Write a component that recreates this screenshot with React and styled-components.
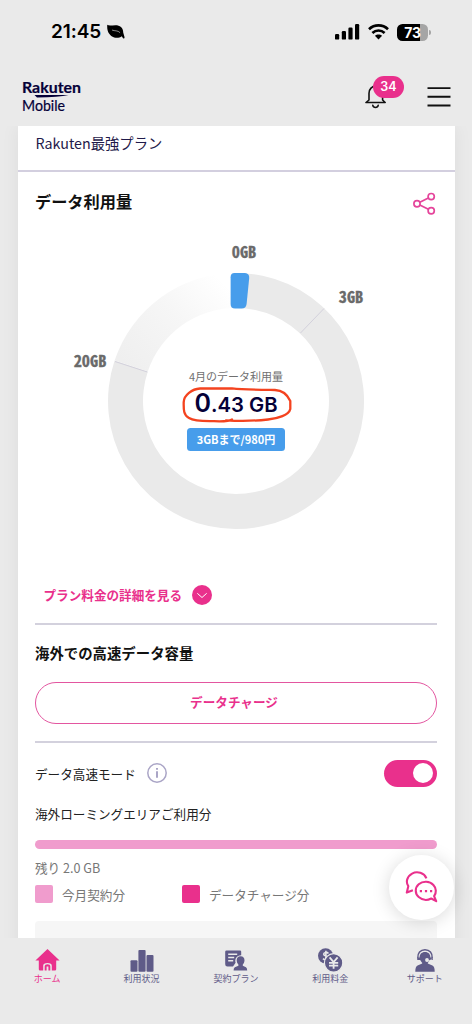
import styled, { createGlobalStyle } from 'styled-components';

const PINK = '#e9308c';
const INDIGO = '#5f5b88';
const NAVY = '#040038';

const GlobalStyle = createGlobalStyle`
  * {
    box-sizing: border-box;
  }

  body {
    margin: 0;
    background: #eaeaea;
    font-family: 'Noto Sans CJK JP', sans-serif;
  }

  svg {
    display: block;
    flex: none;
  }
`;

const Screen = styled.div`
  position: relative;
  display: flex;
  flex-direction: column;
  width: 472px;
  height: 1024px;
  overflow: hidden;
  background: #eaeaea;
`;

const StatusBar = styled.div`
  display: flex;
  align-items: center;
  justify-content: space-between;
  height: 64px;
  padding: 0 41px 0 51px;
`;

const StatusGroup = styled.div`
  display: flex;
  align-items: center;
  gap: ${({ $gap }) => $gap}px;
`;

const Clock = styled.span`
  font: 600 19px/24px Inter, sans-serif;
  letter-spacing: -0.1px;
  color: #000;
`;

const Battery = styled.div`
  display: flex;
  align-items: center;
  gap: 1px;

  &::after {
    content: '';
    width: 2px;
    height: 5px;
    border-radius: 0 2px 2px 0;
    background: #a5a5a5;
  }
`;

const BatteryLevel = styled.div`
  width: 31px;
  height: 17px;
  border-radius: 5.5px;
  background: linear-gradient(to right, #000 73%, #a5a5a5 73%);
  color: #fff;
  font: 700 14px/17px Inter, sans-serif;
  letter-spacing: -0.3px;
  text-align: center;
`;

const Header = styled.header`
  display: flex;
  align-items: center;
  justify-content: space-between;
  height: 62px;
  padding: 4px 21px 0 22px;
`;

const HeaderActions = styled.div`
  display: flex;
  align-items: center;
  gap: 40px;
`;

const BellButton = styled.div`
  position: relative;
`;

const BellCount = styled.span`
  position: absolute;
  top: -9px;
  left: 8px;
  width: 31px;
  height: 22px;
  border-radius: 11px;
  background: ${PINK};
  color: #fff;
  font: 600 12.5px/22px Inter, sans-serif;
  text-align: center;
`;

const Main = styled.main`
  height: 812px;
  padding: 0 17.5px;
  overflow: hidden;
`;

const Card = styled.div`
  display: flex;
  flex-direction: column;
  height: 850px;
  background: #fff;
  box-shadow: 0 0 18px rgba(0, 0, 0, 0.06);
`;

const PlanRow = styled.div`
  height: 46px;
  padding: 5px 18px 0;
  border-bottom: 2px solid #d3cfdf;
  color: #1f1a4a;
  font-size: 14.3px;
  line-height: 24px;
`;

const UsageHead = styled.div`
  display: flex;
  align-items: center;
  justify-content: space-between;
  height: 62px;
  padding: 0 19px 0 17.5px;
`;

const Heading = styled.h2`
  margin: 0;
  padding-bottom: ${({ $lift = 0 }) => $lift}px;
  color: #111;
  font-size: ${({ $size }) => $size}px;
  font-weight: 700;
  line-height: 24px;
`;

const Chart = styled.div`
  position: relative;
  height: 336px;
  margin-left: -17.5px;
`;

const TickLabel = styled.text`
  fill: #6a6a6a;
  stroke: #6a6a6a;
  stroke-width: 0.3px;
  font-size: 16.3px;
  font-weight: 700;
  font-feature-settings: 'hwid';
  text-anchor: middle;
`;

const ChartCenter = styled.div`
  position: absolute;
  top: 133px;
  left: 166px;
  display: flex;
  flex-direction: column;
  align-items: center;
  width: 140px;
`;

const ChartCaption = styled.span`
  color: #6f6f6f;
  font-size: 11px;
  line-height: 18px;
`;

const Amount = styled.span`
  height: 34px;
  margin-top: 1px;
  color: ${NAVY};
  font: 600 20.3px/34px Inter, sans-serif;
  white-space: nowrap;

  b {
    font-size: 25px;
    font-weight: 600;
  }
`;

const PriceTag = styled.span`
  width: 98px;
  height: 23px;
  margin-top: 8px;
  border-radius: 3.5px;
  background: #479deb;
  color: #fff;
  font-size: 11px;
  font-weight: 700;
  line-height: 23px;
  text-align: center;
`;

const Scribble = styled.svg`
  position: absolute;
  top: 0;
  left: 0;
`;

const DetailLink = styled.div`
  display: flex;
  align-items: center;
  gap: 10px;
  height: 53px;
  padding: 0 26px 3px;
  color: ${PINK};
  font-size: 12.6px;
  font-weight: 700;
  line-height: 18px;

  span {
    padding-bottom: 1px;
  }
`;

const Rule = styled.hr`
  width: 402px;
  height: 1.5px;
  margin: 0 17.5px;
  border: 0;
  background: #d3d1dd;
`;

const RoamingSection = styled.section`
  display: flex;
  flex-direction: column;
  height: 116.5px;
  padding: 16.5px 17.5px 0;
`;

const ChargeButton = styled.button`
  height: 42px;
  margin-top: 17px;
  padding: 0 4px 3px 0;
  border: 1.5px solid #e356a0;
  border-radius: 21px;
  background: #fff;
  color: ${PINK};
  font: 700 12.6px 'Noto Sans CJK JP', sans-serif;
`;

const SpeedRow = styled.div`
  display: flex;
  align-items: center;
  gap: 11px;
  height: 28px;
  margin: 16.5px 17.5px 0;
  color: #222;
  font-size: 12.6px;
`;

const Switch = styled.div`
  display: flex;
  align-items: center;
  justify-content: flex-end;
  width: 53px;
  height: 27px;
  margin-left: auto;
  padding: 0 4px;
  border-radius: 14px;
  background: ${PINK};

  &::after {
    content: '';
    width: 20px;
    height: 20px;
    border-radius: 50%;
    background: #fff;
  }
`;

const Quota = styled.div`
  display: flex;
  flex-direction: column;
  padding: 17px 17.5px 0;
`;

const QuotaTitle = styled.span`
  color: #222;
  font-size: 12.6px;
  line-height: 20px;
`;

const QuotaBar = styled.div`
  height: 9px;
  margin-top: 16px;
  border-radius: 5px;
  background: #f09ccd;
`;

const Remaining = styled.span`
  margin-top: 9px;
  color: #777;
  font-size: 12.6px;
  line-height: 20px;
`;

const Legend = styled.div`
  display: grid;
  grid-template-columns: 147px auto;
  margin-top: 7px;
`;

const LegendItem = styled.div`
  display: flex;
  align-items: center;
  gap: 9px;
  height: 18px;
  color: #777;
  font-size: 12.6px;

  &::before {
    content: '';
    width: 18px;
    height: 18px;
    border-radius: 2px;
    background: ${({ $color }) => $color};
  }
`;

const NextPanel = styled.div`
  height: 40px;
  margin-top: 18px;
  border-radius: 4px;
  background: #f6f6f6;
`;

const ChatButton = styled.button`
  position: absolute;
  top: 855px;
  left: 389px;
  display: grid;
  place-items: center;
  width: 65px;
  height: 65px;
  padding: 0;
  border: 0;
  border-radius: 50%;
  background: #fff;
  box-shadow: 0 2px 18px rgba(0, 0, 0, 0.15);
`;

const TabBar = styled.nav`
  z-index: 1;
  display: grid;
  grid-template-columns: repeat(5, 94.4px);
  height: 86px;
  padding-top: 10px;
  background: #eaeaea;
`;

const Tab = styled.div`
  display: flex;
  flex-direction: column;
  align-items: center;
  color: ${({ $active }) => ($active ? PINK : INDIGO)};
  font-size: 9px;
  line-height: 13px;
`;

const BrandLogo = () => (
  <svg width="62" height="36" viewBox="0 0 62 36" fill={NAVY}>
    <text x="0" y="14" fontFamily="Lato" fontWeight="700" fontSize="15.5" stroke={NAVY} strokeWidth=".2" textLength="59" lengthAdjust="spacingAndGlyphs">
      Rakuten
    </text>
    <path d="M12.5 16H46.5Q37 18.4 15 18.4Z" />
    <text x="0" y="32.3" fontFamily="Lato" fontWeight="400" fontSize="15" stroke={NAVY} strokeWidth=".2" textLength="43" lengthAdjust="spacingAndGlyphs">
      Mobile
    </text>
  </svg>
);

const LeafIcon = () => (
  <svg width="18" height="16" viewBox="0 0 18 16">
    <path d="M.3.8C1.8 2 5 1.2 8.4 1.2C13 1.2 16.4 4 16.2 8.6L17.5 13C17.8 14.6 16.2 14.9 15.7 13.8L14.8 12.2C12.8 13.8 9.8 14.3 7.2 13.4C2.4 11.8-.4 7.2.3.8Z" fill="#000" />
    <path d="M5.4 6.2C7.8 7.2 10.6 6.2 12.8 8.4" fill="none" stroke="#eaeaea" strokeWidth=".6" strokeLinecap="round" />
  </svg>
);

const SignalIcon = () => (
  <svg width="25" height="16" viewBox="0 0 25 16">
    <rect x="0" y="10" width="4.2" height="5.6" rx="1.2" />
    <rect x="6.8" y="7" width="4.2" height="8.6" rx="1.2" />
    <rect x="13.4" y="3.6" width="4.2" height="12" rx="1.2" />
    <rect x="20" y="0" width="4.2" height="15.6" rx="1.2" />
  </svg>
);

const WifiIcon = () => (
  <svg width="21" height="16" viewBox="0 0 21 16">
    <g fill="none" stroke="#000" strokeWidth="2.7">
      <path d="M1 5.2C6.4.2 14.6.2 20 5.2" />
      <path d="M4.4 8.9C7.9 5.7 13.1 5.7 16.6 8.9" />
    </g>
    <path d="M6.9 11.8C9 9.9 12 9.9 14.1 11.8L10.5 15.4Z" />
  </svg>
);

const BellIcon = () => (
  <svg width="22" height="24" viewBox="0 0 22 24" fill="none" stroke="#111" strokeWidth="1.6" strokeLinejoin="round" strokeLinecap="round">
    <path d="M1 17.5H20.2L17.6 15V8.2C17.6 4.2 14.6 1 10.8 1S4 4.2 4 8.2V15Z" />
    <path d="M7.8 20.4C8.4 23.2 12.6 23.2 13.2 20.4" />
  </svg>
);

const MenuIcon = () => (
  <svg width="24" height="20" viewBox="0 0 24 20" stroke="#111" strokeWidth="1.9">
    <path d="M.5 1.1H23.5M.5 9.8H23.5M.5 18.5H23.5" />
  </svg>
);

const ShareIcon = () => (
  <svg width="23" height="23" viewBox="0 0 23 23" fill="none" stroke="#e5459b" strokeWidth="1.7">
    <circle cx="4" cy="11.7" r="3.1" />
    <circle cx="18.2" cy="4.6" r="3.1" />
    <circle cx="18.2" cy="18.7" r="3.1" />
    <path d="M6.8 10.3L15.4 6M6.8 13.1L15.4 17.3" />
  </svg>
);

// ring centred on (236, 167), radii 93 and 128
const UsageRing = () => (
  <svg width="472" height="310" viewBox="0 0 472 310">
    <defs>
      <linearGradient id="fade" gradientUnits="userSpaceOnUse" x1="130" y1="135" x2="220" y2="45">
        <stop offset="0" stopColor="#efefef" />
        <stop offset=".55" stopColor="#f6f6f6" />
        <stop offset="1" stopColor="#fff" />
      </linearGradient>
    </defs>
    <path d="M236 39A128 128 0 1 1 114.6 126.5L147.8 137.5A93 93 0 1 0 236 74Z" fill="#eaeaea" />
    <path d="M114.6 126.5A128 128 0 0 1 236 39V74A93 93 0 0 0 147.8 137.5Z" fill="url(#fade)" />
    <g stroke="#d3d1dc" strokeWidth="1">
      <path d="M324 74.5L300.5 99" />
      <path d="M115 127.5L147.3 138" />
    </g>
    <path d="M234.5 39H245Q249.5 39.3 249.2 44L246.6 70Q246 74.6 241.6 74.6H235Q230.6 74.6 230.6 70V43.3Q230.6 39 234.5 39Z" fill="#479deb" />
    <TickLabel x="244" y="24">0GB</TickLabel>
    <TickLabel x="351" y="68.8">3GB</TickLabel>
    <TickLabel x="90" y="132.5">20GB</TickLabel>
  </svg>
);

const ExpandIcon = () => (
  <svg width="20" height="20" viewBox="0 0 20 20">
    <circle cx="10" cy="10" r="10" fill={PINK} />
    <path d="M5.3 8.3L10 12.5L14.7 8.3" fill="none" stroke="#fff" strokeWidth="1" />
  </svg>
);

const InfoIcon = () => (
  <svg width="20" height="20" viewBox="0 0 20 20" stroke="#aaa5c6" fill="none">
    <circle cx="10" cy="10" r="9.2" strokeWidth="1.5" />
    <path d="M10 8.3V14.8M10 5V6.8" strokeWidth="2" />
  </svg>
);

const ChatIcon = () => (
  <svg width="33" height="33" viewBox="0 0 33 33" fill="none" stroke={PINK} strokeWidth="2.1" strokeLinejoin="round">
    <path d="M21.4 7.4C19.2 1.8 12.2-.2 7.1 2.6C2 5.4.5 11 3.3 15.2L1.8 21.6L7.9 19.3" />
    <path d="M29.1 25.2C31.6 21.8 31.4 17 28.4 13.9C24.6 10 18 9.6 13.7 13.3C9.8 16.7 9.8 22.6 13.7 26C17.3 29.1 22.2 29.6 26.2 27.5L31.2 30.2Z" />
    <path d="M14.8 20.1H17M19.9 20.1H22.1M25 20.1H27.2" strokeWidth="2.4" />
  </svg>
);

const HomeIcon = () => (
  <svg width="25" height="24" viewBox="0 0 25 24" fill="currentColor">
    <path d="M12.5 1L24.6 12.6H21.2V21.2Q21.2 22.4 20 22.4H16.8V17.8Q16.8 15 12.5 15T8.2 17.8V22.4H5Q3.8 22.4 3.8 21.2V12.6H.4Z" />
    <path d="M9.7 22.4V18Q9.7 16.3 12.5 16.3T15.3 18V22.4H13.4V18.6H11.6V22.4Z" />
  </svg>
);

const UsageIcon = () => (
  <svg width="24" height="24" viewBox="0 0 24 24" fill="currentColor">
    <rect x=".5" y="12.3" width="7" height="11.4" rx="1" />
    <rect x="8.4" y="2" width="7.2" height="21.7" rx="1" />
    <rect x="16.5" y="7" width="7" height="16.7" rx="1" />
  </svg>
);

const PlanIcon = () => (
  <svg width="24" height="24" viewBox="0 0 24 24" fill="currentColor">
    <path d="M2.6 2.4H16Q17.2 2.4 17.2 3.6V7.2C12.4 7.2 10.6 11 11.6 14.8L9 18.4H3.4Q1.2 18.4 1.2 16.2V3.8Q1.2 2.4 2.6 2.4Z" />
    <path d="M4.2 6.2H13.2M4.2 9.5H10.2M4.2 12.8H9.2" stroke="#eaeaea" strokeWidth="1.4" />
    <path d="M16.6 8.2C19.3 8.2 20.6 10 20.5 12.5C20.4 14.3 19.6 15.8 18.8 16.5V17.8L22 19.2Q23.2 19.9 23.2 22.4H9.6Q9.6 19.9 10.8 19.2L14.4 17.8V16.5C13.6 15.8 12.8 14.3 12.7 12.5C12.6 10 13.9 8.2 16.6 8.2Z" />
  </svg>
);

const BillIcon = () => (
  <svg width="26" height="24" viewBox="0 0 26 24">
    <circle cx="8.6" cy="7.8" r="7.6" fill="currentColor" />
    <path d="M11.4 5.4C10 3.7 6.6 4.2 6.7 6.3C6.8 8.7 11.2 7.4 11.2 10C11.2 12.1 7.6 12.4 6 10.6M8.9 2.7V13" fill="none" stroke="#eaeaea" strokeWidth="1.6" />
    <circle cx="16.6" cy="14.9" r="9.2" fill="currentColor" stroke="#eaeaea" strokeWidth="1.2" />
    <path d="M12.6 9.4L16.6 14.2L20.6 9.4M16.6 14.2V20.8M12 14.8H21.2M12 17.6H21.2" fill="none" stroke="#eaeaea" strokeWidth="1.8" />
  </svg>
);

const SupportIcon = () => (
  <svg width="22" height="24" viewBox="0 0 22 24" fill="currentColor">
    <path d="M3.8 10.2C3.4 5 6.4 1.8 11 1.8S18.6 5 18.2 10.2" fill="none" stroke="currentColor" strokeWidth="1.5" />
    <path d="M11 4C14.5 4 16.5 6.3 16.4 9.6H18.8V11.4Q18.8 12 18.2 12H15.8C15.2 13.3 14.5 14 13.8 14.8V15.6L18.4 17.5Q20.7 18.5 20.7 23.7H1.3Q1.3 18.5 3.6 17.5L8.2 15.6V14.8C7.5 14 6.8 13.3 6.2 12H3.8Q3.2 12 3.2 11.4V9.6H5.6C5.5 6.3 7.5 4 11 4Z" />
    <circle cx="13" cy="12" r="1.9" fill="#eaeaea" />
    <path d="M13.6 13C16 13 17.2 12 17.8 10.7" fill="none" stroke="#eaeaea" strokeWidth=".8" />
  </svg>
);

const tabs = [
  { label: 'ホーム', Icon: HomeIcon, active: true },
  { label: '利用状況', Icon: UsageIcon },
  { label: '契約プラン', Icon: PlanIcon },
  { label: '利用料金', Icon: BillIcon },
  { label: 'サポート', Icon: SupportIcon },
];

const App = () => {
  return (
    <Screen>
      <GlobalStyle />
      <StatusBar>
        <StatusGroup $gap={6}>
          <Clock>21:45</Clock>
          <LeafIcon />
        </StatusGroup>
        <StatusGroup $gap={8}>
          <SignalIcon />
          <WifiIcon />
          <Battery>
            <BatteryLevel>73</BatteryLevel>
          </Battery>
        </StatusGroup>
      </StatusBar>
      <Header>
        <BrandLogo />
        <HeaderActions>
          <BellButton>
            <BellIcon />
            <BellCount>34</BellCount>
          </BellButton>
          <MenuIcon />
        </HeaderActions>
      </Header>
      <Main>
        <Card>
          <PlanRow>Rakuten最強プラン</PlanRow>
          <UsageHead>
            <Heading $size={16.2} $lift={4}>
              データ利用量
            </Heading>
            <ShareIcon />
          </UsageHead>
          <Chart>
            <UsageRing />
            <ChartCenter>
              <ChartCaption>4月のデータ利用量</ChartCaption>
              <Amount>
                <b>0</b>.43 GB
              </Amount>
              <PriceTag>3GBまで/980円</PriceTag>
            </ChartCenter>
            <Scribble width="472" height="310" viewBox="0 0 472 310" fill="none" stroke="#f4431f" strokeWidth="2.3" strokeLinecap="round" strokeLinejoin="round">
              <path d="M232 185.5C229 187.5 222 187.5 214 187.2C204 187 195 187.5 189 184C183 181 183.7 174 183.7 168C184 161 192 155 200 154.5L232 154.3C244 155.7 262 155.8 275 156C283 156.3 288 162 290.3 167V175C289 181 278 184.5 268 185.5C254 187 240 187.2 226 186.3" />
            </Scribble>
          </Chart>
          <DetailLink>
            <span>プラン料金の詳細を見る</span>
            <ExpandIcon />
          </DetailLink>
          <Rule />
          <RoamingSection>
            <Heading $size={14.4}>海外での高速データ容量</Heading>
            <ChargeButton>データチャージ</ChargeButton>
          </RoamingSection>
          <Rule />
          <SpeedRow>
            データ高速モード
            <InfoIcon />
            <Switch />
          </SpeedRow>
          <Quota>
            <QuotaTitle>海外ローミングエリアご利用分</QuotaTitle>
            <QuotaBar />
            <Remaining>残り 2.0 GB</Remaining>
            <Legend>
              <LegendItem $color="#f09ccd">今月契約分</LegendItem>
              <LegendItem $color={PINK}>データチャージ分</LegendItem>
            </Legend>
            <NextPanel />
          </Quota>
        </Card>
      </Main>
      <ChatButton>
        <ChatIcon />
      </ChatButton>
      <TabBar>
        {tabs.map(({ label, Icon, active }) => (
          <Tab key={label} $active={active}>
            <Icon />
            {label}
          </Tab>
        ))}
      </TabBar>
    </Screen>
  );
};

export default App;
